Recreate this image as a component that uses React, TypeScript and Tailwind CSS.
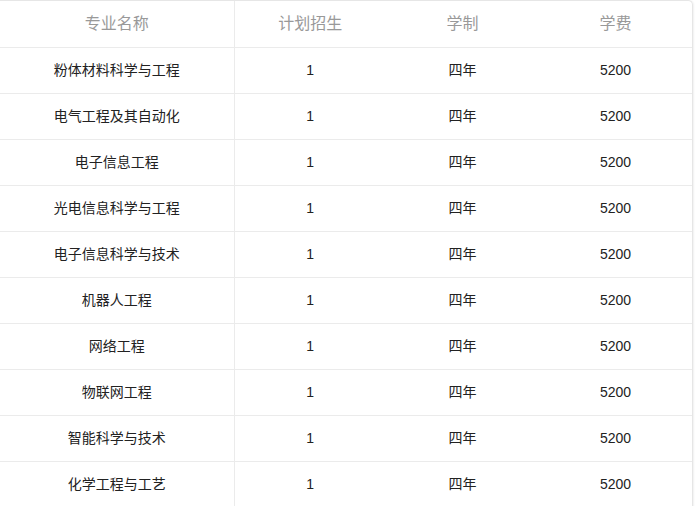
const majors = [
  "粉体材料科学与工程",
  "电气工程及其自动化",
  "电子信息工程",
  "光电信息科学与工程",
  "电子信息科学与技术",
  "机器人工程",
  "网络工程",
  "物联网工程",
  "智能科学与技术",
  "化学工程与工艺",
];

const font = "font-['Liberation_Sans','Noto_Sans_CJK_SC',sans-serif]";

export default function App() {
  return (
    <div className={`w-[695px] h-[506px] overflow-hidden bg-white ${font}`}>
      <div className="w-[693px] border-t border-r border-[#e6e6e6] rounded-tr-[5px] shadow-[1px_0_2px_rgba(0,0,0,0.06)]">
        <table className="w-full table-fixed border-collapse">
          <colgroup>
            <col className="w-[234px]" />
            <col className="w-[152px]" />
            <col className="w-[153px]" />
            <col />
          </colgroup>
          <thead>
            <tr className="h-[46px] border-b border-[#ebebeb]">
              <th className="border-r border-[#ebebeb] text-[16px] font-normal text-[#999]">专业名称</th>
              <th className="text-[16px] font-normal text-[#999]">计划招生</th>
              <th className="text-[16px] font-normal text-[#999]">学制</th>
              <th className="text-[16px] font-normal text-[#999]">学费</th>
            </tr>
          </thead>
          <tbody>
            {majors.map((name) => (
              <tr key={name} className="h-[46px] border-b border-[#ebebeb] text-[14px] text-[#222]">
                <td className="border-r border-[#ebebeb] text-center">{name}</td>
                <td className="text-center">1</td>
                <td className="text-center">四年</td>
                <td className="text-center">5200</td>
              </tr>
            ))}
          </tbody>
        </table>
      </div>
    </div>
  );
}
